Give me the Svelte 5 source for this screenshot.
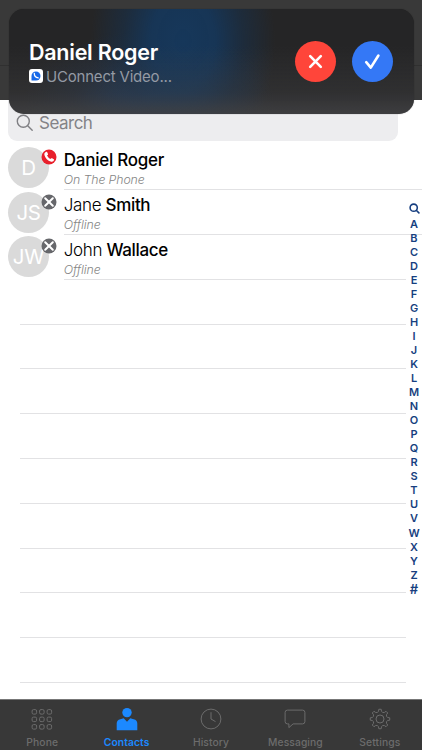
<script>
  const contacts = [
    { initials: 'D', first: '', last: 'Daniel Roger', status: 'On The Phone', busy: true },
    { initials: 'JS', first: 'Jane', last: 'Smith', status: 'Offline', busy: false },
    { initials: 'JW', first: 'John', last: 'Wallace', status: 'Offline', busy: false }
  ];
  const letters = [...'ABCDEFGHIJKLMNOPQRSTUVWXYZ#'];
  const emptyRows = Array.from({ length: 9 });
  const tabs = ['Phone', 'Contacts', 'History', 'Messaging', 'Settings'];
  const dots = [2.8, 10.3, 17.8];

  // Eight-toothed cog outline around (11, 11)
  const cog = Array.from({ length: 8 }, (_, i) => {
    const at = (deg, r) => {
      const a = ((i * 45 + deg - 90) * Math.PI) / 180;
      return `${(11 + r * Math.cos(a)).toFixed(2)} ${(11 + r * Math.sin(a)).toFixed(2)}`;
    };
    return `${i ? 'L' : 'M'}${at(-7, 9.8)}L${at(7, 9.8)}L${at(11, 7.9)}Q${at(22.5, 6.2)} ${at(34, 7.9)}`;
  }).join('') + 'Z';
</script>

<div class="screen">
  <header><div class="strip"></div></header>

  <div class="search">
    <svg width="18" height="18" viewBox="0 0 18 18" fill="none" stroke="#808084" stroke-width="1.4" stroke-linecap="round">
      <circle cx="7.3" cy="7.3" r="6" /><path d="M11.7 11.7 16.2 16.2" />
    </svg>
    <span>Search</span>
  </div>

  <main>
    {#each contacts as c}
      <div class="row">
        <div class="avatar">
          <span class:wide={c.initials === 'JW'}>{c.initials}</span>
          <svg class="badge" width="16" height="16" viewBox="0 0 16 16">
            {#if c.busy}
              <circle cx="8" cy="8" r="7.5" fill="#e8202c" />
              <path d="M4.1 3.5 5.3 2.8Q5.8 2.6 6.1 3.1L7 5Q7.2 5.5 6.7 5.9L6 6.5Q7.2 8.8 9.4 10L10.2 9.3Q10.6 9 11.1 9.3L12.8 10.3Q13.3 10.7 13 11.2L12.2 12.3Q11.5 13 10.2 12.7C6.5 11.6 4.4 9.2 3.4 5.9Q3 4.3 4.1 3.5Z" fill="#fff" />
            {:else}
              <circle cx="8" cy="8" r="7.5" fill="#66676b" />
              <path d="m4.2 4.2 7.6 7.6m0-7.6-7.6 7.6" stroke="#fff" stroke-width="2" stroke-linecap="round" />
            {/if}
          </svg>
        </div>
        <div class="info">
          <div class="name">{#if c.first}{c.first}&nbsp;{/if}<b>{c.last}</b></div>
          <div class="status">{c.status}</div>
        </div>
      </div>
    {/each}
    {#each emptyRows as _}
      <div class="row empty"></div>
    {/each}
  </main>

  <nav class="index">
    <div>
      <svg width="11" height="11" viewBox="0 0 11 11" fill="none" stroke="#173f80" stroke-width="1.6" stroke-linecap="round">
        <circle cx="4.7" cy="4.7" r="3.6" /><path d="m7.5 7.5 2.4 2.4" />
      </svg>
    </div>
    {#each letters as l}<div class:hash={l === '#'}>{l}</div>{/each}
  </nav>

  <footer>
    {#each tabs as t, i}
      <div class="tab" class:active={i === 1}>
        <svg width="22" height="22" viewBox="0 0 22 22" fill="none" stroke="#6c6c6c" stroke-width="1">
          {#if i === 0}
            {#each dots as y}{#each dots as x}<rect x={x - 1.7} y={y - 1.7 + 0.5} width="4.5" height="4.5" rx="1.4" />{/each}{/each}
          {:else if i === 1}
            <g fill="#1c89ff" stroke="none">
              <circle cx="11" cy="4.6" r="4.7" />
              <path d="M.7 22.2V15.5Q.7 12 4.3 11.2L7.7 10.2 11 13.7 14.3 10.2 17.7 11.2Q21.3 12 21.3 15.5V22.2Z" />
            </g>
          {:else if i === 2}
            <circle cx="11" cy="11" r="9.9" /><path d="M11 4.2V11L15.5 13.6" />
          {:else if i === 3}
            <path d="M3.5 2.1H18.5Q20.9 2.1 20.9 4.4V13.5Q20.9 15.9 18.5 15.9H9.1L4.9 19.6V15.9H3.5Q1.1 15.9 1.1 13.5V4.4Q1.1 2.1 3.5 2.1Z" stroke-linejoin="round" />
          {:else}
            <path d={cog} stroke-linejoin="round" /><circle cx="11" cy="11" r="4" />
          {/if}
        </svg>
        <span>{t}</span>
      </div>
    {/each}
  </footer>

  <section class="call">
    <div class="caller">
      <div class="title">Daniel Roger</div>
      <div class="app">
        <svg width="14" height="14" viewBox="0 0 14 14">
          <rect width="14" height="14" rx="3" fill="#fff" />
          <path d="M2.5 11.5V7A4.5 4.5 0 1 1 7 11.5Z" fill="#1769e8" />
          <path d="M5.3 4.5Q5.3 8.4 9.2 8.9" stroke="#fff" stroke-width="1.3" stroke-linecap="round" fill="none" />
        </svg>
        <span>UConnect Video...</span>
      </div>
    </div>
    <div class="actions">
      <button class="decline" aria-label="Decline">
        <svg width="41" height="41" viewBox="0 0 41 41"><path d="m15.2 15.2 10.6 10.6m0-10.6-10.6 10.6" /></svg>
      </button>
      <button class="accept" aria-label="Accept">
        <svg width="41" height="41" viewBox="0 0 41 41"><path d="m14.2 21.2 4.6 5.4 7.6-12.1" /></svg>
      </button>
    </div>
  </section>
</div>

<style>
  :global(body) { margin: 0; }
  .screen {
    position: relative;
    display: flex;
    flex-direction: column;
    width: 422px;
    height: 750px;
    overflow: hidden;
    background: #fff;
    font-family: Inter, 'Liberation Sans', sans-serif;
  }
  header { height: 100px; flex: none; background: #393939; }
  .strip { height: 65px; border-bottom: 1px solid #303030; }
  .search {
    flex: none;
    box-sizing: border-box;
    width: 390px;
    height: 40.5px;
    margin-left: 8px;
    padding: 14px 0 0 8px;
    display: flex;
    border-radius: 0 0 9px 9px;
    background: #ededef;
    color: #838387;
  }
  .search span { font-size: 17px; line-height: 19px; margin-left: 5px; letter-spacing: -.5px; }
  main { flex: 1; min-height: 0; padding-top: 4.9px; }
  .row { height: 44.8px; display: flex; }
  .avatar {
    position: relative;
    flex: none;
    width: 41px;
    height: 41px;
    margin: 1.5px 0 0 8.4px;
    border-radius: 50%;
    background: #dadada;
    color: #fff;
    display: flex;
    align-items: center;
    justify-content: center;
    font-size: 20.5px;
    letter-spacing: -.5px;
  }
  .avatar span { margin-left: -1px; }
  .avatar .wide { letter-spacing: -.2px; }
  .badge { position: absolute; left: 32.6px; top: 2px; }
  .info {
    flex: 1;
    box-sizing: border-box;
    height: 44.8px;
    margin-left: 14.4px;
    padding-top: 5px;
    border-bottom: 1px solid #e2e2e4;
  }
  .row:nth-child(3) .info { margin-right: 16px; }
  .name { font-size: 17px; line-height: 21px; color: #000; white-space: nowrap; font-weight: 300; letter-spacing: -.36px; }
  .name b { font-weight: 500; }
  .row:first-child .name { letter-spacing: -.26px; }
  .status { font-size: 12.3px; line-height: 18.4px; font-style: italic; color: #858585; font-weight: 300; letter-spacing: -.1px; }
  .empty { box-sizing: border-box; margin: 0 16px 0 20px; border-bottom: 1px solid #e2e2e4; }
  .index {
    position: absolute;
    left: 406px;
    top: 201px;
    width: 16px;
    color: #173f80;
    font-size: 11px;
    font-weight: 600;
    text-align: center;
  }
  .index div { height: 14.05px; line-height: 14.05px; }
  .index div:first-child { height: 15.5px; display: flex; align-items: center; justify-content: center; }
  .index .hash { font-size: 13px; }
  footer { flex: none; height: 51px; display: flex; box-sizing: border-box; background: #383838; border-top: 1px solid #777; }
  .tab { flex: 1; display: flex; flex-direction: column; align-items: center; padding-top: 8px; color: #6c6c6c; font-size: 10.3px; font-weight: 500; letter-spacing: .1px; }
  .tab svg { display: block; overflow: visible; }
  .tab span { margin-top: 6px; line-height: 13px; }
  .tab.active { color: #1c89ff; }
  .tab.active span { font-weight: 600; }
  .call {
    position: absolute;
    left: 8.5px;
    top: 8.5px;
    width: 405px;
    height: 105.5px;
    box-sizing: border-box;
    padding: 0 20.5px;
    display: flex;
    justify-content: space-between;
    border-radius: 15px;
    background:
      linear-gradient(to bottom, rgba(68, 68, 70, 0) 35%, rgba(68, 68, 70, .35) 80%, rgba(66, 66, 68, .85) 100%),
      radial-gradient(ellipse 92px 130px at 174px 32px, #16375a 0%, rgba(22, 54, 88, .95) 35%, rgba(24, 48, 74, .6) 65%, rgba(36, 36, 37, 0) 100%),
      radial-gradient(ellipse 125px 70px at 140px 92px, rgba(25, 60, 105, .9), rgba(30, 48, 72, .4) 60%, rgba(36, 36, 37, 0)),
      #252526;
    box-shadow: 0 0 1px rgba(0, 0, 0, .5);
  }
  .title { margin-top: 30px; color: #fff; font-size: 21.5px; line-height: 26px; font-weight: 600; letter-spacing: -.25px; white-space: nowrap; }
  .app { display: flex; align-items: center; margin-top: 2.5px; height: 18px; color: #949aa4; font-size: 15px; letter-spacing: -.2px; }
  .app span { margin-left: 3px; white-space: nowrap; }
  .actions { display: flex; gap: 16px; margin-top: 32px; }
  button { width: 41px; height: 41px; padding: 0; border: 0; border-radius: 50%; }
  button svg { display: block; fill: none; stroke: #fff; stroke-width: 2.6; stroke-linecap: round; stroke-linejoin: round; }
  .decline { background: #ff453a; }
  .accept { background: #3478f6; }
</style>
